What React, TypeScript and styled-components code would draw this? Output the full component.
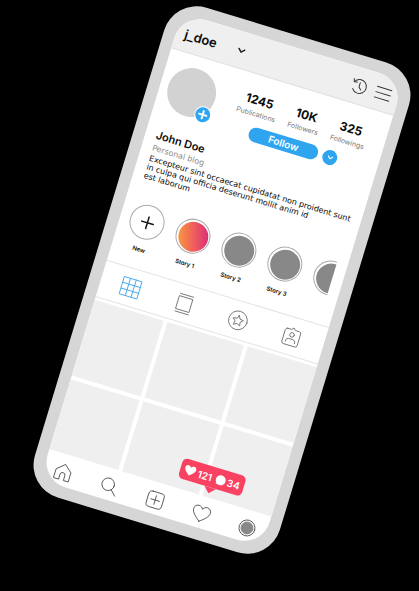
import React from "react";
import styled, { createGlobalStyle } from "styled-components";

const GlobalStyle = createGlobalStyle`
  * { box-sizing: border-box; }
  body { margin: 0; background: #000; font-family: Inter, "Open Sans", sans-serif; }
  button { font: inherit; color: inherit; background: none; border: 0; padding: 0; cursor: pointer; }
  svg { display: block; overflow: visible; }
`;

const Stage = styled.main`
  min-height: 100vh;
  display: flex;
  align-items: center;
  justify-content: center;
  padding: 0 0 32px 25px;
  overflow: hidden;
`;

const Phone = styled.div`
  width: 100%;
  max-width: 256px;
  flex: none;
  padding: 12px;
  border-radius: 34px;
  background: #d6d6d6;
  transform: rotate(16.9deg);
`;

const Screen = styled.div`
  border-radius: 26px;
  background: #fff;
  overflow: hidden;
  color: #0b0b0b;
`;

const Header = styled.header`
  display: flex;
  align-items: center;
  height: 37px;
  padding: 2px 8px 0 9px;
  background: #efefef;
  border-bottom: 1px solid #e2e2e2;
`;

const AccountButton = styled.button`
  display: flex;
  align-items: center;
  gap: 22px;
  margin-right: auto;
`;

const Username = styled.h1`
  margin: 0;
  font-size: 13px;
  line-height: 16px;
  font-weight: 600;
`;

const HeaderActions = styled.div`
  display: flex;
  align-items: center;
  gap: 9px;
`;

const IconButton = styled.button`
  display: flex;
  align-items: center;
  justify-content: center;
`;

const Profile = styled.section`
  display: flex;
  gap: 26px;
  padding: 12px 19px 0 8px;
`;

const Avatar = styled.div`
  position: relative;
  width: 49px;
  height: 49px;
  border-radius: 50%;
  background: #d2d2d2;
`;

const AvatarAdd = styled.button`
  position: absolute;
  right: -1px;
  bottom: -2px;
  display: grid;
  place-items: center;
  width: 17px;
  height: 17px;
  border: 1px solid #fff;
  border-radius: 50%;
  background: #2fa5ef;
`;

const Summary = styled.div`
  flex: 1;
  min-width: 0;
`;

const Stats = styled.dl`
  display: flex;
  justify-content: space-between;
  margin: 4px 0 7px -3px;
  text-align: center;
`;

const Stat = styled.div`
  display: flex;
  flex-direction: column-reverse;
`;

const StatValue = styled.dd`
  margin: 0;
  font-size: 12px;
  line-height: 17px;
  font-weight: 700;
`;

const StatLabel = styled.dt`
  font-size: 7px;
  line-height: 11px;
  color: #777;
`;

const Actions = styled.div`
  display: flex;
  align-items: center;
  justify-content: flex-end;
  gap: 5px;
  margin-right: 22px;
`;

const FollowButton = styled.button`
  width: 72px;
  height: 15px;
  border-radius: 8px;
  background: #2fa5ef;
  color: #fff;
  font-size: 10px;
  line-height: 15px;
  font-weight: 600;
`;

const RoundButton = styled.button`
  display: grid;
  place-items: center;
  width: 15px;
  height: 15px;
  border-radius: 50%;
  background: #2fa5ef;
`;

const About = styled.section`
  padding: 14px 0 0 11px;
  white-space: nowrap;
`;

const FullName = styled.h2`
  margin: 0;
  font-size: 11px;
  line-height: 15px;
  font-weight: 600;
`;

const Category = styled.p`
  margin: 0;
  font-family: "DejaVu Sans", sans-serif;
  font-size: 8px;
  line-height: 12px;
  color: #8a8a8a;
`;

const Bio = styled.p`
  margin: 0;
  font-family: "DejaVu Sans", sans-serif;
  font-size: 8px;
  line-height: 9px;
`;

const Stories = styled.ul`
  display: flex;
  gap: 13px;
  margin: 22px 11px 0 0;
  padding: 0 0 0 10px;
  list-style: none;
  overflow: hidden;
`;

const Story = styled.li`
  flex: none;
  width: 35px;
`;

const StoryButton = styled.button`
  display: flex;
  flex-direction: column;
  align-items: center;
  gap: 6px;
  width: 100%;
  font-size: 6px;
  line-height: 10px;
  font-weight: 600;
  white-space: nowrap;
`;

const StoryRing = styled.span`
  display: grid;
  place-items: center;
  width: 35px;
  height: 35px;
  border: 1px solid #a9a9a9;
  border-radius: 50%;
`;

const StoryDisc = styled.span<{ $fill: string }>`
  width: 30px;
  height: 30px;
  border-radius: 50%;
  background: ${(p) => p.$fill};
`;

const Tabs = styled.nav`
  display: grid;
  grid-template-columns: repeat(4, 1fr);
  align-items: center;
  height: 39px;
  margin-top: 14px;
  padding: 0 5px 0 3px;
  border: solid #e4e4e4;
  border-width: 1px 0;
`;

const Photos = styled.div`
  display: grid;
  grid-template-columns: 8fr 9fr 8fr;
  grid-template-rows: 79px 73px;
  gap: 4px;
  margin-top: 3px;
`;

const Photo = styled.div`
  background: #efefef;
`;

const BottomNav = styled.nav`
  position: relative;
  display: flex;
  justify-content: space-between;
  height: 32px;
  padding: 9px 11px 0;
`;

const NavButton = styled(IconButton)`
  width: 18px;
  height: 18px;
`;

const Notice = styled.div`
  position: absolute;
  left: 131px;
  bottom: 42px;
  display: flex;
  align-items: center;
  justify-content: center;
  gap: 2px;
  width: 66px;
  height: 21px;
  border-radius: 5px;
  background: #f94262;
  color: #fff;
  font-size: 10px;
  line-height: 12px;
  font-weight: 600;

  &::after {
    content: "";
    position: absolute;
    top: 100%;
    left: 28px;
    border: solid transparent;
    border-width: 6px 6px 0;
    border-top-color: #f94262;
  }
`;

const line = { fill: "none", strokeLinecap: "round", strokeLinejoin: "round" } as const;

const HEART =
  "M9 16.5C4.5 13 .3 9.5.3 5.8.3 3 2.2 1.2 4.6 1.2c2 0 3.6 1.1 4.4 3 .8-1.9 2.4-3 4.4-3 2.4 0 4.3 1.8 4.3 4.6 0 3.7-4.2 7.2-8.7 10.7z";

const Chevron = ({ color, size }: { color: string; size: number }) => (
  <svg width={size} height={size / 2} viewBox="0 0 8 4" {...line} stroke={color} strokeWidth="1.5">
    <path d="M1 0.5 4 3.5 7 0.5" />
  </svg>
);

const HistoryIcon = () => (
  <svg width="16" height="16" viewBox="0 0 16 16" {...line} stroke="#333" strokeWidth="1">
    <path d="M2.2 4.3A7 7 0 1 1 2.4 11.8" />
    <path d="M1 1.7 1.9 4.8 5 4.3" />
    <path d="M8 4v4.6l2.4 2.2" />
  </svg>
);

const MenuIcon = () => (
  <svg width="16" height="12" viewBox="0 0 16 12" {...line} stroke="#333" strokeWidth="1">
    <path d="M0.5 0.5h15M0.5 6h15M0.5 11.5h15" />
  </svg>
);

const PlusIcon = ({ size, color, weight }: { size: number; color: string; weight: number }) => (
  <svg width={size} height={size} viewBox="0 0 14 14" {...line} stroke={color} strokeWidth={weight}>
    <path d="M7 1v12M1 7h12" />
  </svg>
);

const TabIcon = ({ color = "#777", children }: { color?: string; children: React.ReactNode }) => (
  <svg width="20" height="20" viewBox="0 0 20 20" {...line} stroke={color} strokeWidth="0.9">
    {children}
  </svg>
);

const NavIcon = ({ children }: { children: React.ReactNode }) => (
  <svg width="18" height="18" viewBox="0 0 18 18" {...line} stroke="#444" strokeWidth="0.8">
    {children}
  </svg>
);

const tabs = [
  {
    name: "Grid",
    icon: (
      <TabIcon color="#4aa9ea">
        <path d="M1 1h18v18H1zM7 1v18M13 1v18M1 7h18M1 13h18" />
      </TabIcon>
    ),
  },
  {
    name: "Feed",
    icon: (
      <TabIcon>
        <path d="M3.2 3.3h13.6v13.4H3.2zM3.2 0.8h13.6M3.2 19.2h13.6" />
      </TabIcon>
    ),
  },
  {
    name: "Favourites",
    icon: (
      <TabIcon>
        <circle cx="10" cy="10" r="9.4" />
        <path d="m10 4.8 1.6 3.4 3.7.5-2.7 2.6.7 3.7-3.3-1.8L6.7 15l.7-3.7-2.7-2.6 3.7-.5z" />
      </TabIcon>
    ),
  },
  {
    name: "Tagged",
    icon: (
      <TabIcon>
        <path d="M4 3h4l2-2 2 2h4a2 2 0 0 1 2 2v12a2 2 0 0 1-2 2H4a2 2 0 0 1-2-2V5a2 2 0 0 1 2-2z" />
        <circle cx="10" cy="8.2" r="2.3" />
        <path d="M5.3 16v-1a2.5 2.5 0 0 1 2.5-2.5h4.4a2.5 2.5 0 0 1 2.5 2.5v1" />
      </TabIcon>
    ),
  },
];

const navItems = [
  {
    name: "Home",
    icon: (
      <NavIcon>
        <path d="M1.5 7.5 9 1l7.5 6.5V17h-5v-5a2.5 2.5 0 0 0-5 0v5h-5z" />
      </NavIcon>
    ),
  },
  {
    name: "Search",
    icon: (
      <NavIcon>
        <circle cx="7.5" cy="7.5" r="6.3" />
        <path d="m12 12 5 5" />
      </NavIcon>
    ),
  },
  {
    name: "Create",
    icon: (
      <NavIcon>
        <rect x="1" y="1" width="16" height="16" rx="3.5" />
        <path d="M9 4.5v9M4.5 9h9" />
      </NavIcon>
    ),
  },
  {
    name: "Likes",
    icon: (
      <NavIcon>
        <path d={HEART} />
      </NavIcon>
    ),
  },
  {
    name: "Profile",
    icon: (
      <NavIcon>
        <circle cx="9" cy="9" r="8" />
        <circle cx="9" cy="9" r="6" fill="#888" stroke="#888" />
      </NavIcon>
    ),
  },
];

const stats = [
  ["1245", "Publications"],
  ["10K", "Followers"],
  ["325", "Followings"],
];

const stories = [
  { label: "Story 1", fill: "linear-gradient(73deg, #fba43a, #f0605c 50%, #d6247c)" },
  { label: "Story 2", fill: "#888" },
  { label: "Story 3", fill: "#888" },
  { label: "", fill: "#888" },
];

export default function App() {
  return (
    <Stage>
      <GlobalStyle />
      <Phone>
        <Screen>
          <Header>
            <AccountButton>
              <Username>j_doe</Username>
              <Chevron color="#222" size={8} />
            </AccountButton>
            <HeaderActions>
              <IconButton aria-label="History"><HistoryIcon /></IconButton>
              <IconButton aria-label="Menu"><MenuIcon /></IconButton>
            </HeaderActions>
          </Header>

          <Profile>
            <Avatar>
              <AvatarAdd aria-label="Add to story">
                <PlusIcon size={9} color="#fff" weight={3} />
              </AvatarAdd>
            </Avatar>
            <Summary>
              <Stats>
                {stats.map(([value, label]) => (
                  <Stat key={label}>
                    <StatLabel>{label}</StatLabel>
                    <StatValue>{value}</StatValue>
                  </Stat>
                ))}
              </Stats>
              <Actions>
                <FollowButton>Follow</FollowButton>
                <RoundButton aria-label="Suggestions"><Chevron color="#fff" size={6} /></RoundButton>
              </Actions>
            </Summary>
          </Profile>

          <About>
            <FullName>John Doe</FullName>
            <Category>Personal blog</Category>
            <Bio>
              Excepteur sint occaecat cupidatat non proident sunt
              <br />
              in culpa qui officia deserunt mollit anim id
              <br />
              est laborum
            </Bio>
          </About>

          <Stories>
            <Story>
              <StoryButton>
                <StoryRing><PlusIcon size={14} color="#111" weight={1.5} /></StoryRing>
                New
              </StoryButton>
            </Story>
            {stories.map((story, i) => (
              <Story key={i}>
                <StoryButton aria-label={story.label || "Next story"}>
                  <StoryRing><StoryDisc $fill={story.fill} /></StoryRing>
                  {story.label}
                </StoryButton>
              </Story>
            ))}
          </Stories>

          <Tabs>
            {tabs.map((tab) => (
              <IconButton key={tab.name} aria-label={tab.name}>{tab.icon}</IconButton>
            ))}
          </Tabs>

          <Photos>
            {Array.from({ length: 6 }, (_, i) => <Photo key={i} />)}
          </Photos>

          <BottomNav>
            {navItems.map((item) => (
              <NavButton key={item.name} aria-label={item.name}>{item.icon}</NavButton>
            ))}
            <Notice>
              <svg width="12" height="11" viewBox="0 0 18 17" fill="#fff">
                <path d={HEART} />
              </svg>
              <span>121</span>
              <svg width="12" height="10" viewBox="0 0 12 10" fill="#fff">
                <circle cx="7" cy="5" r="5" />
                <path d="M3 7v2.5l3-.5z" />
              </svg>
              <span>34</span>
            </Notice>
          </BottomNav>
        </Screen>
      </Phone>
    </Stage>
  );
}
